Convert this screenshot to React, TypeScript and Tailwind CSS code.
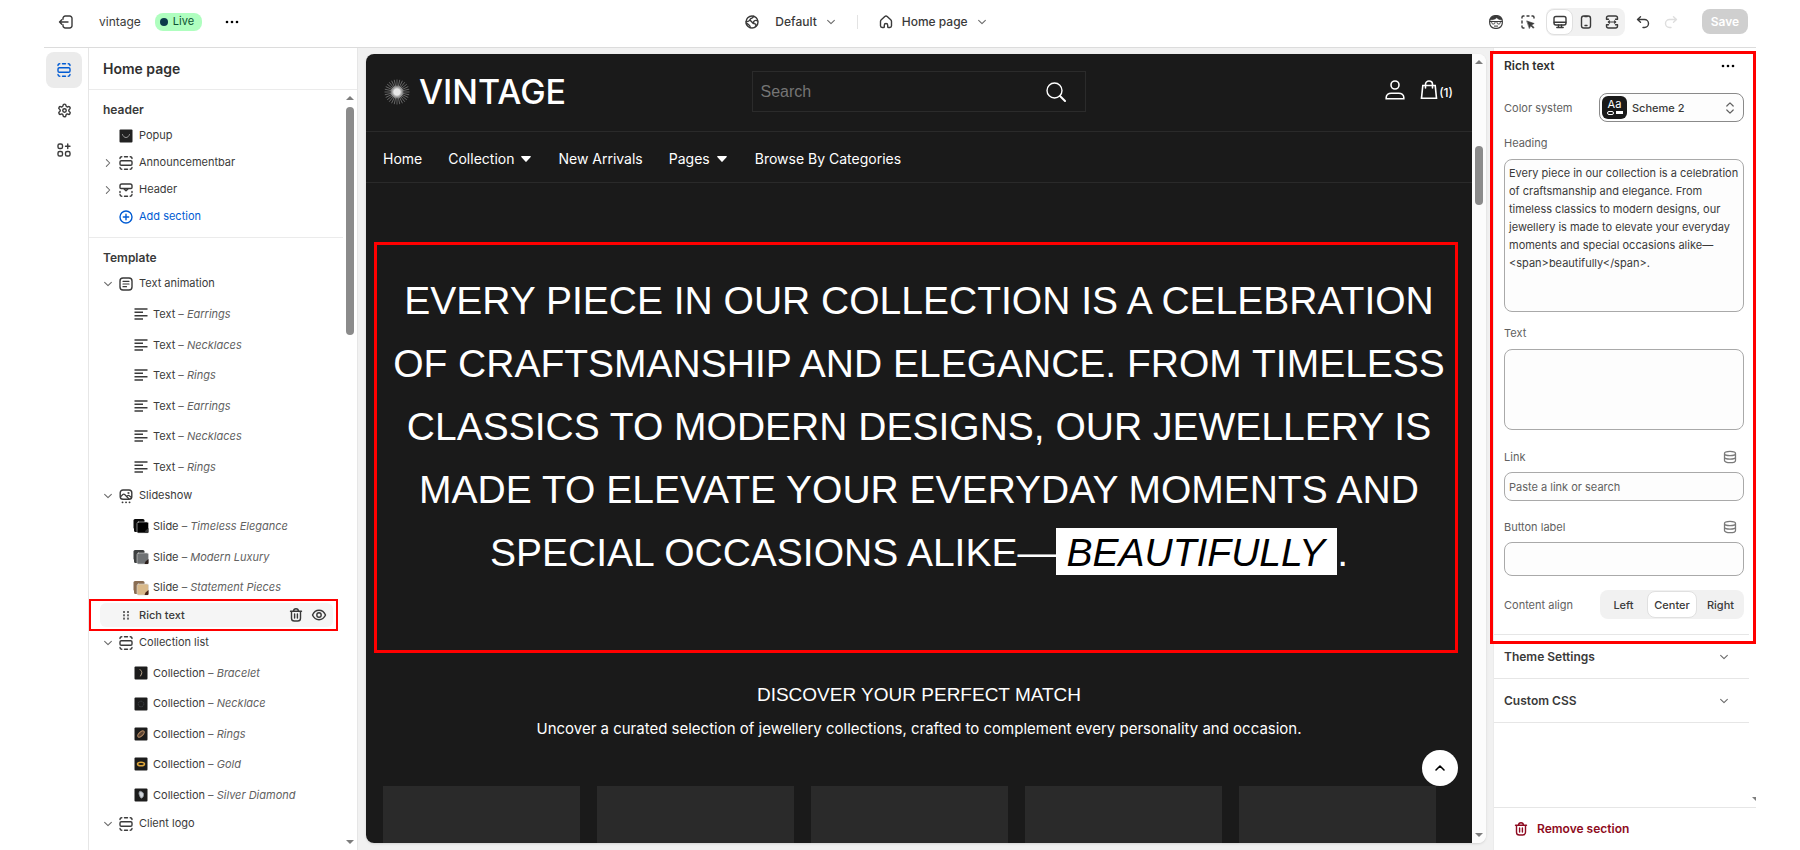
import type { ReactNode } from "react";

const SHOP_FONT = "font-['Liberation_Sans',Arial,sans-serif]";

function Svg({ children, className = "size-4", box = 16, stroke = 1.4 }: { children: ReactNode; className?: string; box?: number; stroke?: number }) {
  return (
    <svg viewBox={`0 0 ${box} ${box}`} className={`shrink-0 ${className}`} fill="none" stroke="currentColor" strokeWidth={stroke} strokeLinecap="round" strokeLinejoin="round" aria-hidden="true">
      {children}
    </svg>
  );
}

const ExitIcon = () => (
  <Svg className="size-4">
    <path d="M5 5.2V4.3A2.3 2.3 0 0 1 7.300 2h4.400A2.300 2.300 0 0 1 14 4.300v7.400A2.300 2.300 0 0 1 11.700 14H7.300A2.300 2.300 0 0 1 5 11.700v-.9" />
    <path d="M10 8H1.500M3.800 5.700 1.500 8l2.300 2.300" />
  </Svg>
);
const DotsIcon = ({ className = "size-4" }: { className?: string }) => (
  <Svg className={className}>
    <g fill="currentColor" stroke="none"><circle cx="3" cy="8" r="1.300" /><circle cx="8" cy="8" r="1.300" /><circle cx="13" cy="8" r="1.300" /></g>
  </Svg>
);
const GlobeIcon = () => (
  <Svg className="size-4">
    <circle cx="8" cy="8" r="6" />
    <path d="M9.500 2.300c-.2 1.500-1.200 1.500-2.300 2.100S6 6.300 4.800 7 2.400 7.400 2.100 7.800M6.200 13.600c.2-1.300-.4-2-1.200-2.600S3.300 9.200 2.300 9.500M13.800 7c-1-.6-2.300-.9-3.300-.2s-1.300 1.700-.5 2.600 1.800.3 2 1.200-.4 1.300-.6 2M6.400 6.600l2.900 3" />
  </Svg>
);
const HomeIcon = () => (
  <Svg className="size-4">
    <path d="M2.500 7.600c0-.7.300-1.300.8-1.800l3.500-3.300a1.800 1.800 0 0 1 2.400 0l3.500 3.300c.5.5.8 1.100.8 1.800v4.200c0 1-.8 1.700-1.700 1.700h-1.300c-.5 0-.8-.3-.8-.8v-1.500a1.700 1.700 0 0 0-3.400 0v1.500c0 .5-.3.8-.8.8H4.200c-1 0-1.700-.8-1.700-1.700Z" />
  </Svg>
);
const ChevronDown = ({ className = "size-3" }: { className?: string }) => (
  <Svg className={className}><path d="m3.500 5.800 4.500 4.500 4.500-4.500" /></Svg>
);
const ChevronRight = ({ className = "size-3" }: { className?: string }) => (
  <Svg className={className}><path d="M5.800 3.500 10.300 8l-4.500 4.500" /></Svg>
);
const FaceIcon = () => (
  <Svg className="size-4" stroke={1.2}>
    <rect x="1.700" y="1.700" width="12.600" height="12.600" rx="5.300" />
    <path d="M2 5.800C2.600 3.300 5 1.800 8 1.800s5.400 1.500 6 4C12 6 9.800 5.200 8.700 3.800 7.200 5.400 4.500 6 2 5.800Z" fill="currentColor" strokeWidth="0.500" />
    <path d="M1.900 7.500h12.200" strokeWidth="1" />
    <path d="M3.700 7.700v.8c0 .9.600 1.500 1.400 1.500h.5C6.500 10 7 9.400 7 8.500v-.8M9 7.700v.8c0 .9.600 1.500 1.400 1.500h.5c.9 0 1.400-.6 1.400-1.500v-.8M6.400 12.100h3.200" strokeWidth="1" />
  </Svg>
);
const SelectIcon = () => (
  <Svg className="size-4">
    <path d="M2 4V3.200C2 2.500 2.500 2 3.200 2H4M7 2h2M12 2h.8c.7 0 1.200.5 1.200 1.200V4M2 7v2M2 12v.8c0 .7.500 1.200 1.200 1.200H4" />
    <path d="m7 7 7.200 2.500-2.700 1.400 2.600 2.500-.9.900-2.500-2.600L9.500 14.200Z" fill="currentColor" strokeWidth="0.600" />
  </Svg>
);
const DesktopIcon = () => (
  <Svg className="size-4"><rect x="2" y="2.500" width="12" height="8.500" rx="2" /><path d="M2.200 8.300h11.600M6.500 11v2.300M9.500 11v2.300M4.800 13.500h6.400" /></Svg>
);
const PhoneIcon = () => (
  <Svg className="size-4"><rect x="3.500" y="2" width="9" height="12" rx="2.300" /><path d="M6.800 2.500h2.400M7 11.500h2" /></Svg>
);
const FullWidthIcon = () => (
  <Svg className="size-4"><path d="M2.500 5.200V4a2 2 0 0 1 2-2h7a2 2 0 0 1 2 2v1.200h-2M2.500 5.200h2M2.500 10.800V12a2 2 0 0 0 2 2h7a2 2 0 0 0 2-2v-1.200h-2M2.500 10.800h2" /><path d="M4.300 8h7.400M5.500 6.900 4.300 8l1.200 1.100M10.500 6.900 11.700 8l-1.200 1.100" strokeWidth="1.200" /></Svg>
);
const UndoIcon = () => (
  <Svg className="size-4"><path d="M5.500 2.800 2.500 5.500l3 2.700M2.800 5.500h6.700a4 4 0 0 1 0 8H8" /></Svg>
);
const RedoIcon = () => (
  <Svg className="size-4"><path d="m10.500 2.800 3 2.700-3 2.700M13.200 5.500H6.500a4 4 0 0 0 0 8H8" /></Svg>
);
const SectionIcon = ({ className = "size-4" }: { className?: string }) => (
  <Svg className={className}>
    <rect x="2" y="5.800" width="12" height="4.400" rx="1.300" />
    <path d="M2 3.600c0-1 .7-1.800 1.800-1.800M6.500 1.800h3M12.200 1.800c1 0 1.800.8 1.800 1.800M2 12.500c0 1 .7 1.700 1.800 1.700M6.500 14.200h3M12.200 14.200c1 0 1.800-.7 1.800-1.700" />
  </Svg>
);
const HeaderIcon = () => (
  <Svg className="size-4">
    <path d="M2 5.500V3.800C2 2.800 2.800 2 3.800 2h8.400c1 0 1.800.8 1.800 1.800v1.700c0 .6-.4 1-1 1H3c-.6 0-1-.4-1-1ZM5.500 6.500l2.500 2.300 2.500-2.300M2 9.500v1M14 9.500v1M2 12.500c0 1 .7 1.700 1.800 1.700M6.500 14.200h3M12.200 14.200c1 0 1.800-.7 1.800-1.700" />
  </Svg>
);
const GearIcon = () => (
  <Svg className="size-[15px]" box={24} stroke={2.3}>
    <path d="M9.700 4.100a2.300 2.300 0 0 1 4.600 0 2.300 2.300 0 0 0 3.300 1.900 2.300 2.300 0 0 1 2.300 4 2.300 2.300 0 0 0 0 3.900 2.300 2.300 0 0 1-2.300 4 2.300 2.300 0 0 0-3.300 1.900 2.300 2.300 0 0 1-4.600 0 2.300 2.300 0 0 0-3.300-1.900 2.300 2.300 0 0 1-2.300-4 2.300 2.300 0 0 0 0-3.900 2.300 2.300 0 0 1 2.300-4 2.300 2.300 0 0 0 3.300-1.900" />
    <circle cx="12" cy="12" r="2.800" />
  </Svg>
);
const AppsIcon = () => (
  <Svg className="size-4">
    <rect x="2" y="2" width="4.500" height="4.500" rx="1.600" /><rect x="2" y="9.500" width="4.500" height="4.500" rx="1.600" /><rect x="9.500" y="9.500" width="4.500" height="4.500" rx="1.600" />
    <path d="M11.750 2v4.500M9.500 4.250H14" />
  </Svg>
);
const PlusCircleIcon = () => (
  <Svg className="size-4"><circle cx="8" cy="8" r="6" /><path d="M8 5.300v5.400M5.300 8h5.400" /></Svg>
);
const TextBlockIcon = () => (
  <Svg className="size-4"><rect x="2" y="2" width="12" height="12" rx="3" /><path d="M5 5.300h6M5 8h6M5 10.700h3.500" strokeWidth="1.200" /></Svg>
);
const LinesIcon = () => (
  <Svg className="size-4"><path d="M1.500 3h13M1.500 6.300h8.500M1.500 9.700h13M1.500 13H10" strokeLinecap="butt" /></Svg>
);
const SlideshowIcon = () => (
  <Svg className="size-4">
    <rect x="2.200" y="2" width="11.600" height="9.300" rx="2.800" />
    <path d="m2.500 8.800 2.300-2.300c.6-.6 1.300-.6 1.900 0l4.300 4.500M8.800 8.300l.7-.6c.6-.5 1.200-.5 1.800 0l2.200 1.800" strokeWidth="1.200" /><circle cx="10.500" cy="5" r=".4" fill="currentColor" />
    <path d="M4.500 14.300h.1M8 14.300h.1M11.500 14.300h.1" strokeWidth="1.800" />
  </Svg>
);
const TrashIcon = ({ className = "size-4" }: { className?: string }) => (
  <Svg className={className}>
    <path d="M2.500 4.200h11M5.500 4A2.500 2.500 0 0 1 8 1.700 2.500 2.500 0 0 1 10.500 4M3.500 4.500v6.700c0 1.700 1 2.800 2.800 2.800h3.400c1.800 0 2.800-1.100 2.800-2.800V4.500M6.600 7v4M9.400 7v4" />
  </Svg>
);
const EyeIcon = () => (
  <Svg className="size-4"><path d="M1.500 8C2.800 5 5.200 3.300 8 3.300S13.200 5 14.500 8c-1.300 3-3.700 4.700-6.500 4.700S2.800 11 1.500 8Z" /><circle cx="8" cy="8" r="2.200" /></Svg>
);
const GripIcon = () => (
  <Svg className="size-4">
    <g fill="#6a6a6a" stroke="none">
      {[4, 7.300, 10.600].map((y) => (<g key={y}><rect x="5" y={y} width="2" height="2" /><rect x="9" y={y} width="2" height="2" /></g>))}
    </g>
  </Svg>
);
const DatabaseIcon = () => (
  <Svg className="size-4 text-[#7a7a7a]" stroke={1.3}>
    <path d="M2.500 4.500c0-1.400 2.500-2.200 5.500-2.200s5.500.8 5.500 2.200v7c0 1.400-2.500 2.200-5.500 2.200s-5.500-.8-5.500-2.200ZM2.500 4.700C2.700 6 5 6.700 8 6.700s5.300-.7 5.500-2M2.500 8.200c.2 1.300 2.500 2 5.500 2s5.300-.7 5.500-2" />
  </Svg>
);
const PopupThumb = () => (
  <Svg className="size-4"><rect x="1.500" y="1.500" width="13" height="13" rx="1" fill="#222" stroke="none" /><path d="M4.500 6.500c.7 2 2 3 3.500 3s2.800-1 3.500-3" stroke="#999" strokeWidth="1" /></Svg>
);

function SlideThumb({ back, front, accent }: { back: string; front: string; accent: string }) {
  return (
    <Svg className="size-4">
      <rect x="0.500" y="1" width="11" height="10" rx="1.500" fill={back} stroke="none" />
      <path d="M1 8.500 4 7v7H2.500A1.500 1.500 0 0 1 1 12.500Z" fill={back} stroke="none" />
      <rect x="4" y="4" width="11.500" height="11" rx="1.500" fill={front} stroke="#d4d4d4" strokeWidth="0.600" />
      <path d="m15.500 10-3 2.500-1 2.500h2.500c1 0 1.500-.5 1.500-1.500Z" fill={accent} stroke="none" />
    </Svg>
  );
}
function CollectionThumb({ kind }: { kind: number }) {
  return (
    <Svg className="size-4" stroke={1}>
      <rect x="1.500" y="1.500" width="13" height="13" rx="1" fill="#1c1c1c" stroke="none" />
      {kind === 0 && <path d="M7 4.500c1 1 2.500 2.500 1.500 4.500L7.500 11" stroke="#b9a58c" />}
      {kind === 1 && <circle cx="8" cy="8" r="2.800" stroke="#3d4044" strokeDasharray="1 1.500" />}
      {kind === 2 && <ellipse cx="8" cy="8" rx="4" ry="2" transform="rotate(-45 8 8)" stroke="#b58a63" fill="#5c4433" />}
      {kind === 3 && <ellipse cx="8" cy="8" rx="3.500" ry="1.800" stroke="#e0a83c" strokeWidth="1.500" />}
      {kind === 4 && <path d="M7 4.500c2.500 0 4 1.500 3.500 4S8 12 7.200 10 5 5.500 7 4.500Z" fill="#cfd3d8" stroke="#8d9298" />}
    </Svg>
  );
}

function ParentRow({ icon, label, open }: { icon: ReactNode; label: string; open?: boolean }) {
  return (
    <div className="flex h-[27px] items-center">
      <span className="flex w-7 justify-center pl-[10px] text-[#6a6a6a]">
        {open === undefined ? null : open ? <ChevronDown /> : <ChevronRight />}
      </span>
      <button type="button" className="flex items-center gap-[5px] pl-[1px]">{icon}{label}</button>
    </div>
  );
}
function ChildRow({ icon, kind, name }: { icon: ReactNode; kind: string; name: string }) {
  return (
    <li className="flex items-center gap-1 pl-11 whitespace-nowrap">
      {icon}
      <span>{kind} <span className="text-[#616161]">– <em>{name}</em></span></span>
    </li>
  );
}

function Triangle({ up }: { up?: boolean }) {
  return (
    <svg viewBox="0 0 8 4" className="h-1 w-2 shrink-0" fill="#7d7d7d" aria-hidden="true">
      <path d={up ? "M0 4 4 0l4 4Z" : "M0 0h8L4 4Z"} />
    </svg>
  );
}

function TopBar() {
  return (
    <header className="grid h-12 shrink-0 grid-cols-[1fr_auto_1fr] items-center border-b border-[#dcdcdc] pb-1 text-xs text-[#3a3a3a]">
      <div className="flex items-center pl-[14px]">
        <button type="button" aria-label="Exit editor"><ExitIcon /></button>
        <span className="ml-[25px]">vintage</span>
        <span className="ml-[14px] flex h-[18px] items-center gap-1 rounded-lg bg-[#affebf] pr-2 pl-1 text-[11px] text-[#0c5132]">
          <span className="m-px size-2 rounded-full bg-[#0c3a4b]" />Live
        </span>
        <button type="button" aria-label="More actions" className="ml-[22px] text-black"><DotsIcon /></button>
      </div>
      <div className="flex items-center pr-[68px] font-medium">
        <GlobeIcon />
        <button type="button" className="ml-[15px] flex items-center gap-2">Default <ChevronDown className="size-3 text-[#6a6a6a]" /></button>
        <span className="mx-5 h-[14px] w-px bg-[#e3e3e3]" />
        <button type="button" className="flex items-center gap-2"><HomeIcon />Home page <ChevronDown className="size-3 text-[#6a6a6a]" /></button>
      </div>
      <div className="flex items-center justify-end pr-2">
        <button type="button" aria-label="Assistant"><FaceIcon /></button>
        <button type="button" aria-label="Inspector" className="ml-4"><SelectIcon /></button>
        <div className="ml-[10px] flex h-7 items-center rounded-lg bg-[#f1f1f1]">
          <button type="button" aria-label="Desktop" className="flex h-[26px] w-[27px] items-center justify-center rounded-lg border border-[#e0e0e0] bg-white"><DesktopIcon /></button>
          <button type="button" aria-label="Mobile" className="flex w-[26px] justify-center"><PhoneIcon /></button>
          <button type="button" aria-label="Full width" className="flex w-[26px] justify-center"><FullWidthIcon /></button>
        </div>
        <button type="button" aria-label="Undo" className="ml-[10px]"><UndoIcon /></button>
        <button type="button" aria-label="Redo" className="ml-3 text-[#dedede]"><RedoIcon /></button>
        <button type="button" className="ml-[23px] h-[25px] w-[46px] rounded-lg bg-[#cfcfcf] text-xs font-semibold text-white">Save</button>
      </div>
    </header>
  );
}

function Sidebar() {
  const texts = ["Earrings", "Necklaces", "Rings", "Earrings", "Necklaces", "Rings"];
  const slides: [string, string, string, string][] = [
    ["Timeless Elegance", "#0a0a0a", "#000000", "#333333"],
    ["Modern Luxury", "#3d3f40", "#6f7274", "#2a1d1a"],
    ["Statement Pieces", "#8a6d52", "#d9b98a", "#4a2417"],
  ];
  const collections = ["Bracelet", "Necklace", "Rings", "Gold", "Silver Diamond"];
  return (
    <aside className="flex w-[270px] shrink-0 flex-col border-x border-[#e6e6e6] text-[11px] text-[#3a3a3a]">
      <h1 className="flex h-[42px] shrink-0 items-center border-b border-[#ebebeb] pl-[14px] text-sm font-semibold text-[#303030]">Home page</h1>
      <div className="flex min-h-0 flex-1">
        <nav aria-label="Sections" className="min-w-0 flex-1 overflow-hidden">
          <div className="border-b border-[#ebebeb] pt-2 pb-[7px]">
            <h2 className="h-6 pl-[14px] text-xs leading-6 font-semibold">header</h2>
            <ParentRow icon={<PopupThumb />} label="Popup" />
            <ParentRow icon={<SectionIcon />} label="Announcementbar" open={false} />
            <ParentRow icon={<HeaderIcon />} label="Header" open={false} />
            <div className="text-[#005bd3]"><ParentRow icon={<PlusCircleIcon />} label="Add section" /></div>
          </div>
          <div className="pt-2">
            <h2 className="h-6 pl-[14px] text-xs leading-6 font-semibold">Template</h2>
            <ParentRow icon={<TextBlockIcon />} label="Text animation" open />
            <ul className="mt-[2px] grid h-[183px] auto-rows-fr">
              {texts.map((n, i) => <ChildRow key={i} icon={<LinesIcon />} kind="Text" name={n} />)}
            </ul>
            <ParentRow icon={<SlideshowIcon />} label="Slideshow" open />
            <ul className="mt-[2px] grid h-[92px] auto-rows-fr">
              {slides.map(([n, b, f, a]) => <ChildRow key={n} icon={<SlideThumb back={b} front={f} accent={a} />} kind="Slide" name={n} />)}
            </ul>
            <div className="relative mb-[2px] flex h-6 items-center pr-[10px] pl-[11px]">
              <div className="flex h-6 flex-1 items-center rounded-md bg-[#f5f5f5] pr-[6px] pl-[18px] font-medium">
                <GripIcon />
                <span className="ml-[5px] flex-1">Rich text</span>
                <button type="button" aria-label="Delete section"><TrashIcon /></button>
                <button type="button" aria-label="Hide section" className="ml-[7px]"><EyeIcon /></button>
              </div>
              <div className="pointer-events-none absolute -inset-y-1 right-[5px] left-0 border-2 border-[#ff0000]" />
            </div>
            <ParentRow icon={<SectionIcon />} label="Collection list" open />
            <ul className="mt-[2px] grid h-[152px] auto-rows-fr">
              {collections.map((n, i) => <ChildRow key={n} icon={<CollectionThumb kind={i} />} kind="Collection" name={n} />)}
            </ul>
            <ParentRow icon={<SectionIcon />} label="Client logo" open />
          </div>
        </nav>
        <div className="flex w-[14px] shrink-0 flex-col items-center pt-[6px] pb-[6px]">
          <Triangle up />
          <div className="mt-[7px] h-[228px] w-2 rounded-full bg-[#8b8b8b]" />
          <div className="flex-1" />
          <Triangle />
        </div>
      </div>
    </aside>
  );
}

function Logo() {
  return (
    <a href="#" className="flex items-center gap-[9px]">
      <svg viewBox="0 0 26 26" className="size-[26px]" aria-hidden="true">
        <defs>
          <radialGradient id="core"><stop offset="0.450" stopColor="#e8e8e8" /><stop offset="1" stopColor="#e8e8e8" stopOpacity="0" /></radialGradient>
        </defs>
        {Array.from({ length: 28 }, (_, i) => (
          <path key={i} d="M13 .5v8" stroke="#8f8f8f" strokeWidth="0.600" transform={`rotate(${(i * 360) / 28} 13 13)`} />
        ))}
        <circle cx="13" cy="13" r="7" fill="url(#core)" />
      </svg>
      <span className="font-[Inter,sans-serif] text-[34px] leading-[42px] font-medium">VINTAGE</span>
    </a>
  );
}

const Caret = () => (
  <svg viewBox="0 0 10 6" className="h-[6px] w-[10px]" fill="currentColor" aria-hidden="true"><path d="M.8 0h8.400c.6 0 .9.700.5 1.100L5.600 5.600a.8.800 0 0 1-1.200 0L.3 1.100C-.1.700.2 0 .8 0Z" /></svg>
);

function Preview() {
  return (
    <main className="relative flex min-w-0 flex-1 bg-[#f1f1f1] pt-[6px] pr-[7px] pb-[7px] pl-2">
      <div className="flex min-w-0 flex-1 overflow-hidden rounded-lg bg-white shadow-sm">
        <div className={`relative flex min-w-0 flex-1 flex-col overflow-hidden bg-[#1a1a1a] text-white ${SHOP_FONT}`}>
          <div className="flex h-[78px] shrink-0 items-center border-b border-[#2a2a2a] pr-[19px] pb-[2px] pl-[18px]">
            <div className="flex-1"><Logo /></div>
            <form className="flex h-[41px] w-[334px] items-center border border-[#2b2b2b] pr-[19px] pl-2">
              <input type="search" aria-label="Search" placeholder="Search" className="min-w-0 flex-1 bg-transparent text-base outline-none placeholder:text-[#757575]" />
              <button type="button" aria-label="Submit search">
                <Svg box={20} className="size-5"><circle cx="8.500" cy="8.500" r="7.500" /><path d="m14 14 5 5" strokeWidth="2" /></Svg>
              </button>
            </form>
            <div className="flex flex-1 items-center justify-end pb-1">
              <a href="#" aria-label="Account">
                <Svg box={20} className="size-5" stroke={1.6}><circle cx="10" cy="5" r="4" /><path d="M1.200 18.700v-1.200c0-2.700 2.300-4.300 5-4.300h7.600c2.700 0 5 1.600 5 4.300v1.200Z" strokeLinejoin="miter" /></Svg>
              </a>
              <a href="#" aria-label="Cart" className="ml-[14px] flex items-center">
                <Svg box={20} className="size-5" stroke={1.6}><path d="M3.800 5.500h12.400l1.300 12.800h-15ZM6.500 8V4.300C6.500 2.500 8 1 10 1s3.500 1.500 3.500 3.300V8" strokeLinejoin="miter" /></Svg>
                <span className="pt-[6px] font-[Inter,sans-serif] text-xs font-medium">(1)</span>
              </a>
            </div>
          </div>
          <nav aria-label="Store" className="flex h-[51px] shrink-0 items-center border-b border-[#2a2a2a] pt-1 pl-[17px] font-[Inter,sans-serif] text-sm">
            <a href="#">Home</a>
            <a href="#" className="ml-[26px] flex items-center gap-[7px]">Collection <Caret /></a>
            <a href="#" className="ml-[27px]">New Arrivals</a>
            <a href="#" className="ml-[26px] flex items-center gap-[7px]">Pages <Caret /></a>
            <a href="#" className="ml-7">Browse By Categories</a>
          </nav>
          <section className="mt-[59px] mr-[14px] ml-2 shrink-0 border-[3px] border-[#ff0000] pt-6 pb-[66px] pl-[6px] text-center">
            <h2 className="text-[39px] leading-[63px] uppercase">
              Every piece in our collection is a celebration<br />
              of craftsmanship and elegance. From timeless<br />
              classics to modern designs, our jewellery is<br />
              made to elevate your everyday moments and<br />
              special occasions alike—<em className="bg-white pt-[3px] pr-3 pb-px pl-[10px] text-black">beautifully</em>.
            </h2>
          </section>
          <section className="shrink-0 pt-7 text-center">
            <h3 className="text-[19px] leading-7 uppercase">Discover your perfect match</h3>
            <p className="mt-2 font-[Inter,sans-serif] text-[15px] leading-6">Uncover a curated selection of jewellery collections, crafted to complement every personality and occasion.</p>
          </section>
          <div className="mt-[45px] grid min-h-0 flex-1 grid-cols-5 gap-[17px] pr-9 pl-[17px]">
            {[0, 1, 2, 3, 4].map((i) => <div key={i} className="bg-[#2a2a2a]" />)}
          </div>
          <button type="button" aria-label="Back to top" className="absolute right-[14px] bottom-[57px] flex size-9 items-center justify-center rounded-full bg-white text-black">
            <Svg className="size-4" stroke={1.6}><path d="m4 10 4-4 4 4" /></Svg>
          </button>
        </div>
        <div className="flex w-[14px] shrink-0 flex-col items-center bg-[#fcfcfc] py-[6px]">
          <Triangle up />
          <div className="mt-[82px] h-[59px] w-2 rounded-full bg-[#8b8b8b]" />
          <div className="flex-1" />
          <Triangle />
        </div>
      </div>
    </main>
  );
}

const FIELD = "block w-full rounded-lg border border-[#a9a9a9] bg-[#fdfdfd] px-1 text-[11px] text-[#3a3a3a] outline-none placeholder:text-[#616161]";

function Settings() {
  return (
    <aside className="flex w-[263px] shrink-0 flex-col border-l border-[#ebebeb] bg-white text-[11px] leading-[18px] text-[#616161]">
      <section className="relative pb-[15px] pr-3 pl-[10px]">
        <div className="flex h-9 items-center justify-between pr-2 text-[#303030]">
          <h2 className="text-xs font-semibold">Rich text</h2>
          <button type="button" aria-label="Section actions" className="text-black"><DotsIcon /></button>
        </div>
        <div className="mt-[9px] flex items-center justify-between">
          <label htmlFor="scheme">Color system</label>
          <div className="relative w-[145px]">
            <select id="scheme" className="block h-[29px] w-full appearance-none rounded-lg border border-[#8a8a8a] bg-[#fdfdfd] pl-8 text-[11px] font-medium text-[#3a3a3a] outline-none">
              <option>Scheme 2</option>
            </select>
            <span className="pointer-events-none absolute inset-y-[3px] left-[3px] flex w-[25px] flex-col items-center rounded-md bg-[#1a1a1a] pt-px text-white" aria-hidden="true">
              <span className="text-[11px] leading-[14px]">Aa</span>
              <span className="flex gap-[2px]"><span className="h-1 w-[7px] rounded-sm border border-white" /><span className="h-[3px] w-[7px] bg-white" /></span>
            </span>
            <span className="pointer-events-none absolute inset-y-0 right-1.5 flex items-center text-[#616161]" aria-hidden="true">
              <Svg className="size-4" stroke={1.2}><path d="M4.800 6 8 2.800 11.200 6M4.800 10 8 13.200l3.200-3.200" /></Svg>
            </span>
          </div>
        </div>
        <label htmlFor="heading" className="mt-3 block">Heading</label>
        <textarea id="heading" className={`mt-[7px] h-[153px] resize-none overflow-hidden py-1 leading-[18px] ${FIELD}`} defaultValue="Every piece in our collection is a celebration of craftsmanship and elegance. From timeless classics to modern designs, our jewellery is made to elevate your everyday moments and special occasions alike—<span>beautifully</span>." />
        <label htmlFor="text" className="mt-3 block">Text</label>
        <textarea id="text" className={`mt-[7px] h-[81px] resize-none ${FIELD}`} />
        <div className="mt-[18px] flex items-center justify-between pr-[6px]">
          <label htmlFor="link">Link</label>
          <button type="button" aria-label="Connect link source"><DatabaseIcon /></button>
        </div>
        <input id="link" type="text" placeholder="Paste a link or search" className={`mt-[6px] h-[29px] ${FIELD}`} />
        <div className="mt-[17px] flex items-center justify-between pr-[6px]">
          <label htmlFor="button-label">Button label</label>
          <button type="button" aria-label="Connect label source"><DatabaseIcon /></button>
        </div>
        <input id="button-label" type="text" className={`mt-[6px] h-[34px] ${FIELD}`} />
        <div className="mt-[14px] flex items-center justify-between">
          <span id="align-label">Content align</span>
          <div role="group" aria-labelledby="align-label" className="flex h-[29px] w-[144px] items-center rounded-lg bg-[#f1f1f1] font-medium text-[#3a3a3a]">
            <button type="button" className="flex-1">Left</button>
            <button type="button" className="h-[27px] w-[50px] rounded-lg border border-[#e0e0e0] bg-white">Center</button>
            <button type="button" className="flex-1">Right</button>
          </div>
        </div>
        <div className="pointer-events-none absolute top-[3px] right-0 -bottom-[10px] -left-1 border-[3px] border-[#ff0000]" />
      </section>
      <div className="mr-[7px] border-t border-[#e6e6e6] text-xs font-semibold text-[#3a3a3a]">
        {["Theme Settings", "Custom CSS"].map((t) => (
          <button key={t} type="button" className="flex h-11 w-full items-center justify-between border-b border-[#e6e6e6] pr-[19px] pl-[10px]">
            {t}<span className="text-[#6a6a6a]"><ChevronDown /></span>
          </button>
        ))}
      </div>
      <div className="flex flex-1 items-end justify-end pb-[6px]">
        <svg viewBox="0 0 4 4" className="size-1" fill="#7d7d7d" aria-hidden="true"><path d="M0 0h4v4Z" /></svg>
      </div>
      <div className="flex h-[43px] shrink-0 items-center border-t border-[#e6e6e6] pl-[19px]">
        <button type="button" className="flex items-center gap-2 text-xs font-semibold text-[#8e0b21]"><TrashIcon />Remove section</button>
      </div>
    </aside>
  );
}

export default function App() {
  return (
    <div className="flex h-screen flex-col overflow-hidden bg-white px-11 font-[Inter,sans-serif]">
      <TopBar />
      <div className="flex min-h-0 flex-1">
        <div className="flex w-11 shrink-0 flex-col items-start gap-1 pt-1 pl-[2px] text-[#3a3a3a]">
          <button type="button" aria-label="Sections" className="flex size-9 items-center justify-center rounded-lg bg-[#ebebeb] text-[#005bd3]"><SectionIcon /></button>
          <button type="button" aria-label="Theme settings" className="flex size-9 items-center justify-center"><GearIcon /></button>
          <button type="button" aria-label="App embeds" className="flex size-9 items-center justify-center"><AppsIcon /></button>
        </div>
        <Sidebar />
        <Preview />
        <Settings />
      </div>
    </div>
  );
}
